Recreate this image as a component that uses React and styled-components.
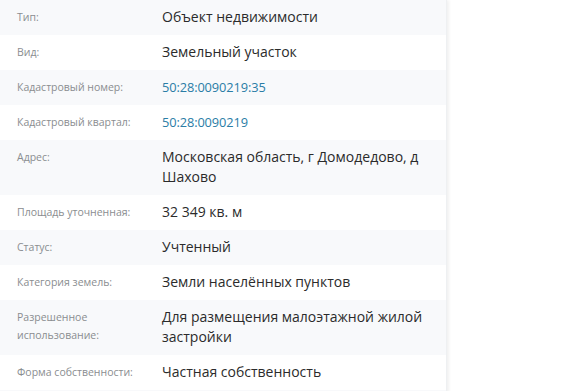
import React from 'react';
import styled, { createGlobalStyle } from 'styled-components';

const GlobalStyle = createGlobalStyle`
    html, body {
        margin: 0;
        padding: 0;
        background: #fff;
    }
    body {
        font-family: "Open Sans", "Noto Sans", sans-serif;
    }
`;

const Page = styled.div`
    width: 581px;
    height: 391px;
    overflow: hidden;
    background: #fff;
`;

const Panel = styled.div`
    width: 446px;
    background: #fff;
    box-shadow: 2px 0 3px rgba(0, 0, 0, 0.06);
    border-right: 1px solid #eef0f2;
`;

const Row = styled.div`
    display: grid;
    grid-template-columns: 145px 272px;
    align-items: start;
    padding: 7px 0 8px 17px;
    background: ${props => props.shaded ? '#f8f9fb' : '#fff'};
`;

const Label = styled.div`
    font-size: 10.5px;
    line-height: 18px;
    color: #8a8d90;
    padding-top: 1px;
`;

const Value = styled.div`
    font-size: ${props => props.link ? '12.8px' : '14px'};
    line-height: 20px;
    letter-spacing: ${props => props.link ? '-0.1px' : '0'};
    color: ${props => props.link ? '#2a7da6' : '#2b2b2b'};
`;

const rows = [
    ['Тип:', 'Объект недвижимости'],
    ['Вид:', 'Земельный участок'],
    ['Кадастровый номер:', '50:28:0090219:35', true],
    ['Кадастровый квартал:', '50:28:0090219', true],
    ['Адрес:', 'Московская область, г Домодедово, д Шахово'],
    ['Площадь уточненная:', '32 349 кв. м'],
    ['Статус:', 'Учтенный'],
    ['Категория земель:', 'Земли населённых пунктов'],
    ['Разрешенное использование:', 'Для размещения малоэтажной жилой застройки'],
    ['Форма собственности:', 'Частная собственность'],
    ['', ''],
];

export default function App() {
    return (
        <Page>
            <GlobalStyle />
            <Panel>
                {rows.map(([label, value, link], i) => (
                    <Row key={i} shaded={i % 2 === 0}>
                        <Label>{label}</Label>
                        <Value link={link}>{value}</Value>
                    </Row>
                ))}
            </Panel>
        </Page>
    );
}
